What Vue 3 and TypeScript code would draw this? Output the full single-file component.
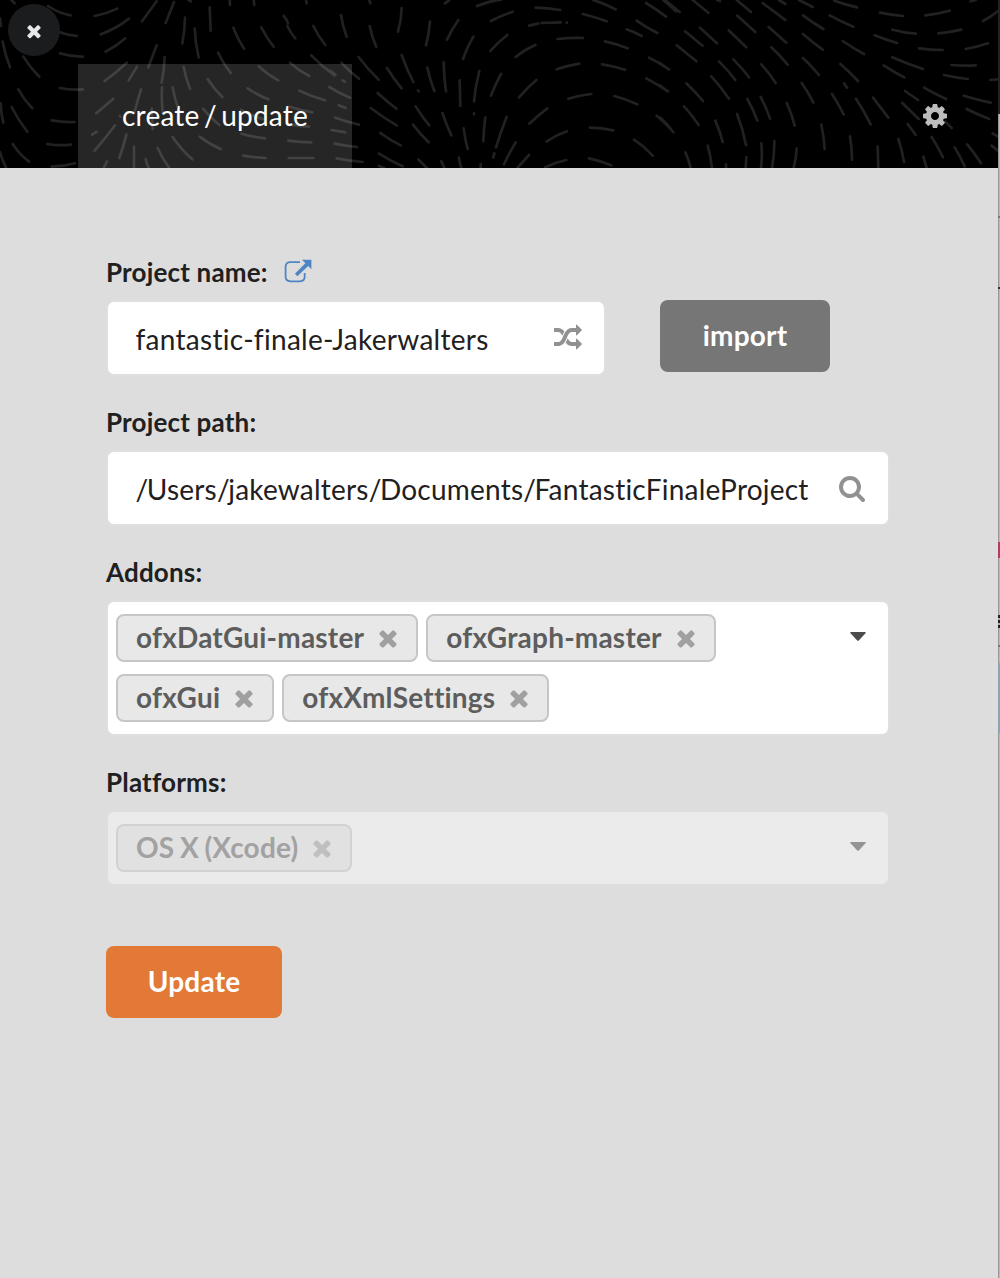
<script setup lang="ts">
import { computed, ref } from 'vue'

type Dash = [number, number, number, number, number]

const icons = {
  times:
    'M1490 1322q0 40-28 68l-136 136q-28 28-68 28t-68-28l-294-294-294 294q-28 28-68 28t-68-28l-136-136q-28-28-28-68t28-68l294-294-294-294q-28-28-28-68t28-68l136-136q28-28 68-28t68 28l294 294 294-294q28-28 68-28t68 28l136 136q28 28 28 68t-28 68l-294 294 294 294q28 28 28 68z',
  cog: 'M1152 896q0-106-75-181t-181-75-181 75-75 181 75 181 181 75 181-75 75-181zm512-109v222q0 12-8 23t-20 13l-185 28q-19 54-39 91 35 50 107 138 10 12 10 25t-9 23q-27 37-99 108t-94 71q-12 0-26-9l-138-108q-44 23-91 38-16 136-29 186-7 28-36 28h-222q-14 0-24.500-8.500t-11.500-21.500l-28-184q-49-16-90-37l-141 107q-10 9-25 9-14 0-25-11-126-114-165-168-7-10-7-23 0-12 8-23 15-21 51-66.500t54-70.500q-27-50-41-99l-183-27q-13-2-21-12.500t-8-23.500v-222q0-12 8-23t19-13l186-28q14-46 39-92-40-57-107-138-10-12-10-24 0-10 9-23 26-36 98.500-107.500t94.500-71.500q13 0 26 10l138 107q44-23 91-38 16-136 29-186 7-28 36-28h222q14 0 24.500 8.500t11.500 21.500l28 184q49 16 90 37l142-107q9-9 24-9 13 0 25 10 129 119 165 170 7 8 7 22 0 12-8 23-15 21-51 66.500t-54 70.500q26 50 41 98l183 28q13 2 21 12.500t8 23.500z',
  random:
    'M666 481q-60 92-137 273-22-45-37-72.500t-40.500-63.500-51-56.500-63-35-81.500-14.500h-224q-14 0-23-9t-9-23v-192q0-14 9-23t23-9h224q250 0 410 225zm1126 799q0 14-9 23l-320 320q-9 9-23 9-13 0-22.500-9.500t-9.500-22.500v-192q-32 0-85 .5t-81 1-73-1-71-5-64-10.500-63-18.500-58-28.500-59-40-55-53.500-56-69.500q59-93 136-273 22 45 37 72.500t40.500 63.500 51 56.500 63 35 81.500 14.500h256v-192q0-14 9-23t23-9q12 0 24 10l319 319q9 9 9 23zm0-896q0 14-9 23l-320 320q-9 9-23 9-13 0-22.500-9.500t-9.500-22.500v-192h-256q-48 0-87 15t-69 45-51 61.500-45 77.500q-32 62-78 171-29 66-49.500 111t-54 105-64 100-74 83-90 68.500-106.500 42-128 16.500h-224q-14 0-23-9t-9-23v-192q0-14 9-23t23-9h224q48 0 87-15t69-45 51-61.500 45-77.500q32-62 78-171 29-66 49.500-111t54-105 64-100 74-83 90-68.500 106.500-42 128-16.500h256v-192q0-14 9-23t23-9q12 0 24 10l319 319q9 9 9 23z',
  search:
    'M1216 832q0-185-131.500-316.500t-316.500-131.500-316.500 131.500-131.500 316.500 131.500 316.500 316.500 131.500 316.500-131.500 131.500-316.500zm512 832q0 52-38 90t-90 38q-54 0-90-38l-343-342q-179 124-399 124-143 0-273.500-55.500t-225-150-150-225-55.500-273.500 55.500-273.500 150-225 225-150 273.500-55.500 273.500 55.500 225 150 150 225 55.500 273.500q0 220-124 399l343 343q37 37 37 91z',
}

// Flow-field strokes, in thirds of a pixel: x1, y1, x2, y2, bend.
const leftDashes: Dash[] = [
  [144, 18, 212, 46, 8], [284, 48, 352, 26, 5], [302, 103, 387, 56, 8], [317, 155, 376, 115, 5],
  [180, 97, 230, 108, 4], [180, 160, 248, 170, 6], [180, 264, 248, 268, 5], [155, 361, 224, 366, 4],
  [142, 432, 213, 434, 5], [155, 500, 225, 490, 5], [8, 125, 30, 202, 4], [70, 170, 118, 230, 5],
  [55, 268, 97, 325, 5], [35, 321, 82, 395, 5], [2, 310, 10, 368, 3], [38, 432, 87, 485, 6],
  [0, 456, 18, 502, 3], [0, 55, 3, 78, 0], [34, 0, 44, 10, 0],
  [470, 4, 426, 64, 0], [522, 6, 497, 69, 0], [555, 53, 547, 130, 3], [584, 86, 596, 172, 4],
  [629, 22, 632, 92, 0], [689, 0, 690, 15, 0], [761, 0, 763, 15, 0], [918, 0, 920, 10, 0], [565, 0, 573, 4, 0],
  [700, 83, 732, 146, 4], [784, 82, 821, 140, 4], [862, 78, 886, 115, 3], [851, 48, 864, 70, -3],
  [940, 78, 976, 135, 4], [654, 158, 692, 219, 4], [470, 136, 445, 202, 0], [494, 171, 485, 248, 3],
  [380, 188, 314, 243, 3], [411, 200, 386, 241, 0], [551, 200, 570, 266, 4], [623, 237, 667, 291, 4],
  [776, 199, 835, 241, 5], [870, 188, 928, 228, 5], [934, 166, 1004, 226, 5], [423, 268, 402, 340, 0],
  [486, 262, 488, 338, 3], [518, 262, 538, 335, 4], [340, 296, 289, 340, 0], [743, 265, 805, 298, 4],
  [898, 272, 975, 301, 3], [988, 261, 1050, 293, 3], [609, 326, 658, 375, 4], [723, 330, 790, 358, 3],
  [869, 320, 937, 337, 2], [345, 376, 284, 452, 2], [379, 404, 358, 474, 2], [402, 440, 402, 504, 0],
  [277, 404, 290, 395, 0], [360, 348, 361, 350, 0], [455, 326, 458, 387, 0], [518, 411, 577, 478, 6],
  [599, 410, 662, 447, 5], [724, 401, 795, 415, 3], [865, 373, 927, 380, 2], [865, 422, 934, 427, 2],
  [730, 467, 797, 474, 2], [866, 474, 940, 474, 0], [473, 444, 508, 504, 4], [437, 477, 446, 504, 2],
  [321, 484, 311, 504, 0],
]
const middleDashes: Dash[] = [
  [33, 45, 50, 110, 4], [119, 78, 139, 141, 4], [118, 0, 121, 10, 0], [215, 24, 204, 95, 5],
  [300, 65, 288, 136, 3], [385, 60, 351, 119, -3], [345, 10, 358, 0, 0], [441, 18, 515, -2, -5],
  [483, 63, 548, 35, -3], [617, 23, 691, 30, -2], [790, 0, 857, 28, -3], [758, 42, 830, 64, -2],
  [597, 77, 625, 71, 0], [635, 69, 692, 67, 0], [710, 68, 711, 68, 0], [683, 117, 759, 114, -3],
  [825, 124, 893, 145, -3], [890, 88, 935, 108, -2], [920, 62, 982, 99, 3], [948, 9, 1008, 50, -2],
  [1000, 0, 1038, 34, 0], [430, 110, 399, 177, -4], [532, 105, 481, 153, -4], [616, 135, 557, 171, -5],
  [680, 208, 748, 191, -3], [816, 193, 885, 209, -3], [957, 173, 1017, 208, -2], [949, 235, 1014, 274, -2],
  [86, 171, 146, 239, 4], [34, 188, 87, 236, 4], [171, 204, 215, 265, 3], [215, 165, 250, 246, 3],
  [292, 203, 313, 273, 3], [341, 187, 348, 274, 3], [389, 241, 391, 318, 0], [448, 213, 432, 304, -4],
  [513, 222, 483, 287, -3], [619, 240, 567, 292, -3], [715, 296, 784, 282, -3], [853, 288, 922, 313, -3],
  [264, 271, 266, 274, 0], [432, 340, 432, 343, 0], [143, 279, 199, 326, 2], [122, 324, 200, 376, 3],
  [257, 319, 298, 376, 3], [337, 339, 364, 406, 2], [249, 374, 296, 427, 3], [151, 399, 212, 436, 3],
  [401, 385, 413, 447, 2], [466, 352, 460, 424, -2], [530, 351, 498, 442, -2], [652, 325, 598, 371, -2],
  [711, 394, 650, 424, -4], [780, 383, 850, 391, -3], [980, 347, 1030, 396, -3], [912, 419, 968, 467, -5],
  [557, 427, 522, 493, -2], [493, 460, 490, 472, 0], [147, 461, 218, 499, 3], [597, 465, 562, 504, 0],
  [265, 478, 291, 504, 0], [334, 484, 343, 504, 0], [387, 473, 394, 504, 2], [452, 492, 452, 504, 0],
  [645, 502, 709, 480, -4], [777, 475, 844, 496, -3], [16, 353, 87, 374, 2], [26, 316, 47, 324, 0],
  [5, 390, 46, 397, 0], [14, 431, 81, 441, 2], [20, 475, 98, 486, 2], [38, 241, 44, 245, 0],
  [0, 212, 16, 224, 0], [147, 498, 162, 504, 0],
]
const rightDashes: Dash[] = [
  [15, 0, 59, 36, 0], [98, 0, 145, 38, 0], [230, 0, 273, 36, 0], [308, 9, 376, 60, 0], [357, 0, 376, 12, 0],
  [417, 0, 458, 21, 0], [523, 2, 591, 22, 2], [660, 38, 729, 48, 2], [796, 46, 869, 32, 3],
  [932, 4, 947, 0, 0], [969, 63, 1014, 33, 3], [232, 47, 286, 96, 0], [429, 46, 490, 87, 2],
  [509, 46, 580, 80, 2], [75, 94, 128, 137, 0], [120, 83, 171, 130, 0], [206, 91, 259, 142, 0],
  [326, 81, 379, 128, 0], [429, 102, 488, 149, 2], [644, 106, 711, 129, 2], [697, 89, 767, 101, 3],
  [835, 100, 904, 89, 3], [917, 147, 984, 130, 3], [50, 136, 109, 184, 0], [548, 123, 612, 162, 2],
  [777, 145, 848, 150, 2], [334, 142, 383, 194, -2], [429, 174, 477, 225, -2], [697, 172, 789, 207, 3],
  [874, 195, 947, 196, 3], [671, 196, 733, 232, 2], [852, 225, 923, 237, 2], [541, 192, 594, 243, -2],
  [177, 184, 226, 240, -3], [220, 178, 267, 232, -3], [304, 193, 347, 249, -3], [79, 250, 129, 303, -2],
  [154, 229, 207, 296, -3], [425, 249, 460, 308, -3], [552, 250, 561, 263, 0], [792, 263, 858, 297, 2],
  [735, 273, 774, 300, 0], [912, 287, 992, 308, 2], [920, 327, 988, 357, 2], [991, 240, 1014, 238, 0],
  [72, 319, 116, 375, -3], [0, 352, 40, 397, -3], [262, 297, 292, 362, -3], [302, 291, 330, 356, -3],
  [380, 309, 404, 377, -4], [516, 282, 551, 343, -2], [588, 296, 632, 373, -3], [639, 293, 685, 353, 0],
  [727, 309, 776, 357, 0], [231, 342, 258, 436, -5], [166, 362, 188, 426, -3], [484, 374, 494, 447, -3],
  [743, 372, 767, 405, 0], [856, 365, 875, 384, 0], [570, 409, 576, 479, -3], [815, 411, 849, 472, -2],
  [143, 437, 156, 504, -3], [76, 457, 92, 504, -3], [304, 430, 303, 504, 4], [343, 423, 336, 504, 4],
  [410, 446, 401, 504, 3], [653, 440, 655, 504, 0], [715, 417, 732, 486, -3], [884, 442, 914, 499, -2],
  [922, 433, 963, 490, -2], [790, 470, 800, 504, 0], [259, 471, 257, 504, 0], [198, 493, 198, 504, 0],
  [998, 400, 1014, 410, 0], [995, 437, 1014, 452, 0], [0, 189, 26, 208, 0], [0, 256, 20, 272, 0],
  [172, 0, 180, 3, 0],
]

// A positive bend lets the stroke's middle sag downward, a negative one lifts it.
function trace(dashes: Dash[], offset: number): string {
  return dashes
    .map(([x1, y1, x2, y2, bend]) => {
      const down = x2 < x1 ? -1 : 1
      const dx = x2 - x1
      const dy = y2 - y1
      const length = Math.hypot(dx, dy) || 1
      const cx = (x1 + x2) / 2 - (dy / length) * bend * down
      const cy = (y1 + y2) / 2 + (dx / length) * bend * down
      return `M${x1 + offset} ${y1}Q${(cx + offset).toFixed(1)} ${cy.toFixed(1)} ${x2 + offset} ${y2}`
    })
    .join('')
}
const pattern = trace(leftDashes, 0) + trace(middleDashes, 990) + trace(rightDashes, 1980)

const projectName = ref('fantastic-finale-Jakerwalters')
const projectPath = ref('/Users/jakewalters/Documents/FantasticFinaleProject')
const pathSegments = computed(() => projectPath.value.split('/').slice(1))
const addons = ref(['ofxDatGui-master', 'ofxGraph-master', 'ofxGui', 'ofxXmlSettings'])
const platforms = ref(['OS X (Xcode)'])
</script>

<template>
  <div class="screen">
    <div class="window">
      <header class="header">
        <svg class="pattern" viewBox="0 0 2994 504" preserveAspectRatio="none" aria-hidden="true">
          <path :d="pattern" />
        </svg>
        <button class="close" aria-label="Close">
          <svg viewBox="0 0 1792 1792"><path :d="icons.times" /></svg>
        </button>
        <div class="tab">create / update</div>
        <svg class="cog" viewBox="0 0 1792 1792"><path :d="icons.cog" /></svg>
      </header>

      <main class="form">
        <div class="row">
          <section class="field name">
            <label class="label">
              Project name:
              <svg class="external" viewBox="0 0 28 24">
                <path d="M16 3.200H6.300Q1.600 3.200 1.600 7.900V17.600Q1.600 22.300 6.300 22.300H16Q20.700 22.300 20.700 17.600V14" fill="none" stroke="currentColor" stroke-width="1.800" />
                <path d="M18 0.800H27.400V10.200L24.200 7L13.400 17.300L10.900 14.800L21.400 4.200Z" fill="currentColor" />
              </svg>
            </label>
            <div class="input">
              <span class="value">{{ projectName }}</span>
              <svg class="icon" viewBox="0 0 1792 1792"><path :d="icons.random" /></svg>
            </div>
          </section>
          <button class="button import">import</button>
        </div>

        <section class="field">
          <label class="label">Project path:</label>
          <div class="input">
            <span class="value path"><template v-for="segment in pathSegments" :key="segment"><span class="slash">/</span>{{ segment }}</template></span>
            <svg class="icon" viewBox="0 0 1792 1792"><path :d="icons.search" /></svg>
          </div>
        </section>

        <section class="field">
          <label class="label">Addons:</label>
          <div class="dropdown">
            <div class="tags">
              <span v-for="addon in addons" :key="addon" class="tag">
                {{ addon }}
                <svg viewBox="0 0 1792 1792"><path :d="icons.times" /></svg>
              </span>
            </div>
            <svg class="caret" viewBox="0 0 16 9"><path d="M1 0H15Q16.500 0 15.500 1.200L9 8.300Q8 9.300 7 8.300L.5 1.200Q-.5 0 1 0Z" /></svg>
          </div>
        </section>

        <section class="field">
          <label class="label">Platforms:</label>
          <div class="dropdown disabled">
            <div class="tags">
              <span v-for="platform in platforms" :key="platform" class="tag">
                {{ platform }}
                <svg viewBox="0 0 1792 1792"><path :d="icons.times" /></svg>
              </span>
            </div>
            <svg class="caret" viewBox="0 0 16 9"><path d="M1 0H15Q16.500 0 15.500 1.200L9 8.300Q8 9.300 7 8.300L.5 1.200Q-.5 0 1 0Z" /></svg>
          </div>
        </section>

        <button class="button update">Update</button>
      </main>
    </div>
    <div class="edge"></div>
  </div>
</template>

<style>
body {
  margin: 0;
  background: #ddd;
}
</style>

<style scoped>
.screen {
  display: flex;
  width: 1000px;
  height: 1278px;
  overflow: hidden;
  font-family: Lato, "Open Sans", sans-serif;
  font-size: 28px;
  font-variant-ligatures: none;
  color: #1f2021;
}
.window {
  width: 998px;
  background: #ddd;
}
.header {
  position: relative;
  display: flex;
  align-items: flex-end;
  justify-content: space-between;
  box-sizing: border-box;
  height: 168px;
  padding: 0 49.500px 0 78px;
  background: #000;
}
.pattern {
  position: absolute;
  inset: 0;
  width: 998px;
  height: 168px;
}
.pattern path {
  fill: none;
  stroke: #212121;
  stroke-width: 8;
  stroke-linecap: round;
}
.close {
  position: absolute;
  left: 8px;
  top: 4px;
  display: flex;
  align-items: center;
  justify-content: center;
  width: 52px;
  height: 52px;
  padding: 2px 1px 0 0;
  box-sizing: border-box;
  border: 0;
  border-radius: 50%;
  background: #1b1c1d;
}
.close svg {
  width: 20px;
  height: 20px;
  fill: #e8e8e8;
}
.tab {
  position: relative;
  box-sizing: border-box;
  width: 274px;
  height: 104px;
  line-height: 103px;
  text-align: center;
  white-space: nowrap;
  letter-spacing: 0.22px;
  word-spacing: -3px;
  color: #fff;
  background: rgba(255, 255, 255, 0.15);
}
.cog {
  position: relative;
  width: 28px;
  height: 28px;
  margin-bottom: 38px;
  fill: #bdbdbd;
}
.form {
  padding: 88px 108px 0 106px;
}
.row {
  display: flex;
  align-items: flex-start;
  gap: 54px;
}
.field {
  margin-bottom: 30px;
}
.name {
  width: 500px;
}
.label {
  display: flex;
  align-items: center;
  height: 32px;
  margin-bottom: 12px;
  font-size: 26px;
  font-weight: 700;
  letter-spacing: 0.18px;
}
.external {
  width: 28px;
  height: 24px;
  margin-left: 16px;
  margin-bottom: 2px;
  color: #5085c5;
}
.input,
.dropdown {
  display: flex;
  box-sizing: border-box;
  justify-content: space-between;
  border: 2px solid #dfdfdf;
  border-radius: 8px;
  background: #fff;
}
.input {
  align-items: center;
  height: 76px;
  padding: 2px 22px 0 27.500px;
  white-space: nowrap;
}
.value {
  letter-spacing: 0.29px;
}
.path {
  letter-spacing: 0.22px;
}
.slash {
  letter-spacing: -1.400px;
}
.icon {
  width: 28px;
  height: 28px;
  margin-bottom: 3px;
  fill: #919191;
}
.button {
  height: 72px;
  padding: 0 0 2px;
  border: 0;
  border-radius: 8px;
  font: 700 28px Lato, sans-serif;
  letter-spacing: 0.2px;
  color: #fff;
}
.import {
  width: 170px;
  margin-top: 44px;
  background: #767676;
}
.update {
  width: 176px;
  margin-top: 30px;
  background: #e27937;
}
.dropdown {
  padding: 6px 22px 6px 8px;
}
.tags {
  display: flex;
  flex-wrap: wrap;
  width: 640px;
  column-gap: 8px;
}
.tag {
  display: flex;
  align-items: center;
  box-sizing: border-box;
  height: 48px;
  margin: 6px 0;
  padding: 0 15px 2px 18px;
  border: 2px solid #c6c6c6;
  border-radius: 8px;
  font-weight: 700;
  letter-spacing: 0.21px;
  color: #5d5d5d;
  background: #e8e8e8;
}
.tag svg {
  width: 26px;
  height: 26px;
  margin: 2px 0 0 11px;
  fill: #a0a0a0;
}
.caret {
  width: 16px;
  height: 9px;
  margin-top: 24px;
  fill: #4c4c4c;
}
.disabled {
  border-color: #dedede;
  background: #ebebeb;
}
.disabled .tag {
  border-color: #d2d2d2;
  color: #a2a2a2;
  background: #e1e1e1;
  word-spacing: -1.500px;
}
.disabled .tag svg {
  fill: #bfbfbf;
}
.disabled .caret {
  fill: #949494;
}
.edge {
  width: 2px;
  background:
    linear-gradient(#222 0 0) 0 0 / 2px 114px no-repeat,
    linear-gradient(#777 0 0) 0 216px / 2px 2px no-repeat,
    linear-gradient(#333 0 0) 0 287px / 2px 2px no-repeat,
    linear-gradient(#b33b62 0 0) 0 542px / 2px 16px no-repeat,
    repeating-linear-gradient(#222 0 3px, #aaa 3px 5px) 0 615px / 2px 13px no-repeat,
    linear-gradient(#777 0 0) 0 645px / 2px 2px no-repeat,
    linear-gradient(#91a2b2 0 0) 0 663px / 2px 70px no-repeat,
    linear-gradient(90deg, #989898 50%, #b9b9b9 50%);
}
</style>
